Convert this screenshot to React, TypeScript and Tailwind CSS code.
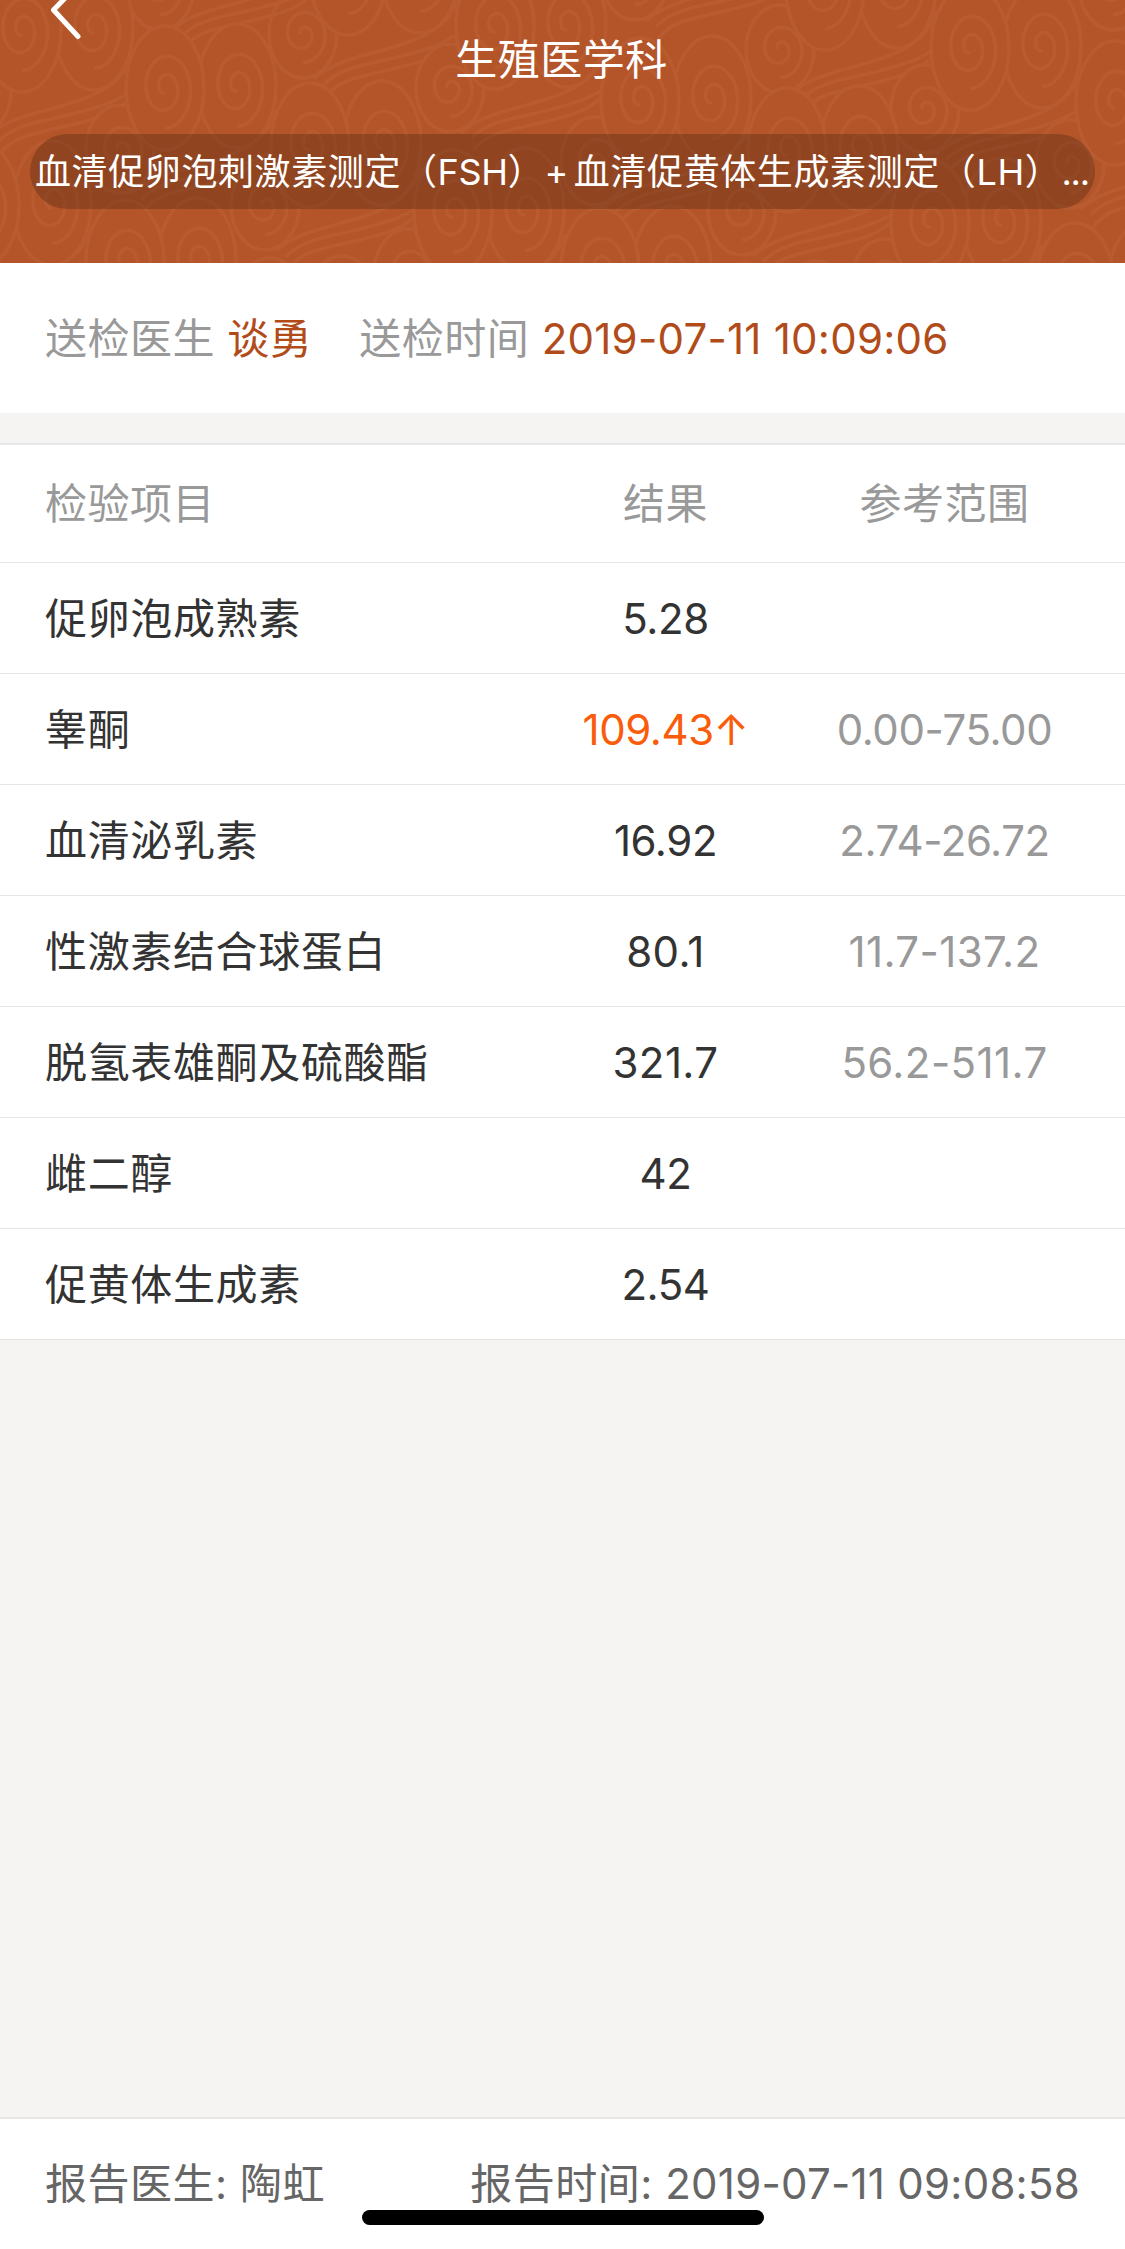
const REPORT = {
  department: '生殖医学科',
  doctor: '谈勇',
  sentAt: '2019-07-11 10:09:06',
  reporter: '陶虹',
  reportedAt: '2019-07-11 09:08:58',
}

const ITEMS = [
  { name: '促卵泡成熟素', value: '5.28', range: '' },
  { name: '睾酮', value: '109.43↑', range: '0.00-75.00', high: true },
  { name: '血清泌乳素', value: '16.92', range: '2.74-26.72' },
  { name: '性激素结合球蛋白', value: '80.1', range: '11.7-137.2' },
  { name: '脱氢表雄酮及硫酸酯', value: '321.7', range: '56.2-511.7' },
  { name: '雌二醇', value: '42', range: '' },
  { name: '促黄体生成素', value: '2.54', range: '' },
]

// Origin of each cloud, back to front
const CLOUDS = [
  [348, -27], [825, -12], [205, -75], [680, -85], [1158, -75],
  [22, 30], [495, 27], [970, 48],
  [165, 88], [640, 100], [1115, 103],
  [310, 145], [787, 150], [-20, 205],
  [453, 212], [930, 222], [125, 262], [600, 270], [1075, 285], [270, 320], [745, 325],
]

function spiral(cx: number, cy: number, rx: number, ry: number, turns: number) {
  const steps = turns * 28
  let d = ''
  for (let i = 0; i <= steps; i++) {
    const k = 1 - (i / steps) * 0.9
    const a = Math.PI / 2 - (i / 28) * Math.PI * 2
    const x = cx + Math.cos(a) * rx * k
    const y = cy + Math.sin(a) * ry * k
    d += `${i === 0 ? 'M' : 'L'}${x.toFixed(1)} ${y.toFixed(1)}`
  }
  return d
}

function Curl({ cx, cy, small }: { cx: number; cy: number; small?: boolean }) {
  const rx = small ? 34 : 39
  const ry = small ? 44 : 62
  return (
    <g>
      <ellipse cx={cx} cy={cy} rx={rx} ry={ry} fill="#b45529" />
      <path d={spiral(cx, cy, rx * 0.74, ry * 0.66, small ? 1.75 : 2)} />
    </g>
  )
}

function CloudPattern() {
  return (
    <svg className="absolute inset-0 h-full w-full" viewBox="0 0 1125 263" fill="none" stroke="#b85b30" strokeWidth="3.5" aria-hidden="true">
      {CLOUDS.map(([x, y]) => (
        <g key={`${x},${y}`} transform={`translate(${x} ${y})`}>
          <path d="M112 22C100 62 60 70 10 84C-10 90 -24 96 -34 106" />
          <path d="M132 36C112 72 70 80 24 90C4 94 -14 100 -24 112" />
          <path d="M104 72C84 92 44 94 4 106C-8 110 -16 116 -22 124" />
          <Curl cx={-45} cy={61} small />
          <Curl cx={72} cy={-2} />
          <Curl cx={0} cy={0} />
        </g>
      ))}
    </svg>
  )
}

function BackIcon() {
  return (
    <svg className="absolute left-[49px] top-0" width="34" height="42" viewBox="0 0 34 42" fill="none" aria-hidden="true">
      <path d="M28 -14L4.5 10L29 36.5" stroke="white" strokeWidth="5" strokeLinecap="round" strokeLinejoin="round" />
    </svg>
  )
}

function Figure({ text }: { text: string }) {
  const oneDecimal = /\.\d(?!\d)/.test(text)
  return <span className={oneDecimal ? 'tracking-[0.4px]' : 'tracking-[-0.4px]'}>{text}</span>
}

export default function App() {
  return (
    <div className="flex h-[2249px] w-[1125px] flex-col overflow-hidden bg-[#f5f4f3] font-['Inter','Noto_Sans_CJK_SC',sans-serif] text-[42px] leading-[60px] tracking-[0.5px] text-[#333]">
      <header className="relative h-[263px] shrink-0 overflow-hidden bg-[#b45529] text-white">
        <CloudPattern />
        <BackIcon />
        <div className="relative flex flex-col items-center px-[30px] pt-[30px]">
          <h1 className="-ml-[2px]">{REPORT.department}</h1>
          <div className="mt-[44px] flex h-[75px] w-full items-center justify-between whitespace-nowrap rounded-full bg-black/20 pl-[5px] pr-[7px] text-[36px] tracking-[0.6px]">
            <span>
              血清促卵泡刺激素测定（<span className="tracking-[-0.3px]">FSH</span>）<span className="mr-[5px]">+</span>
              血清促黄体生成素测定（<span>LH</span>）
            </span>
            <span className="tracking-[-1.2px]">...</span>
          </div>
        </div>
      </header>

      <section className="flex h-[150px] shrink-0 items-center whitespace-nowrap bg-white px-[45px] pt-px text-[#999]">
        <p>
          送检医生 <span className="text-[#b14c1a]">谈勇</span>
        </p>
        <p className="ml-[47px]">
          送检时间 <span className="tracking-[0.25px] text-[#b14c1a]">{REPORT.sentAt}</span>
        </p>
      </section>

      <section className="mt-[30px] border-t-2 border-[#e6e6e6] bg-white">
        <div className="grid h-[118px] grid-cols-[481px_279px_279px] items-center border-b border-[#e6e6e6] pl-[45px] text-[#999]">
          <span>检验项目</span>
          <span className="text-center">结果</span>
          <span className="text-center">参考范围</span>
        </div>
        {ITEMS.map((item) => (
          <div key={item.name} className="grid h-[111px] grid-cols-[481px_279px_279px] items-center border-b border-[#e6e6e6] pl-[45px] pt-px">
            <span className="tracking-[0.65px]">{item.name}</span>
            <span className={item.high ? 'text-center text-[#f95d0c]' : 'text-center'}>
              <Figure text={item.value} />
            </span>
            <span className="text-center text-[#999]">
              <Figure text={item.range} />
            </span>
          </div>
        ))}
      </section>

      <footer className="relative mt-auto flex h-[132px] shrink-0 items-center justify-between border-t-2 border-[#e6e6e6] bg-white px-[45px] text-[#666]">
        <span>报告医生: {REPORT.reporter}</span>
        <span>
          报告时间: <span className="tracking-[0.25px]">{REPORT.reportedAt}</span>
        </span>
        <div className="absolute bottom-[24px] left-[362px] h-[15px] w-[402px] rounded-full bg-black" />
      </footer>
    </div>
  )
}
